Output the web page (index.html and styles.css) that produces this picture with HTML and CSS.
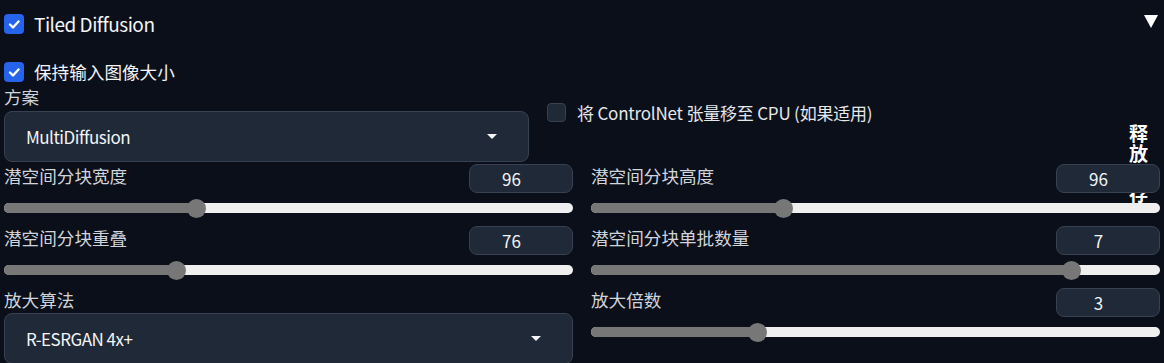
FILE: index.html
```html
<!DOCTYPE html>
<html lang="zh">
<head>
<meta charset="utf-8">
<title>Tiled Diffusion</title>
<link rel="stylesheet" href="styles.css">
</head>
<body>
<div class="panel">
  <div class="accordion-head">
    <label class="check-row title">
      <span class="cb on"><svg viewBox="0 0 20 20" width="20" height="20"><path d="M6 10.5l3 3 5.5-6" fill="none" stroke="#fff" stroke-width="2.4" stroke-linecap="round" stroke-linejoin="round"/></svg></span>
      <span class="latin">Tiled Diffusion</span>
    </label>
    <svg class="caret" viewBox="0 0 14 13" width="14" height="13"><polygon points="0,0 14,0 7,13" fill="#fff"/></svg>
  </div>

  <label class="check-row keep">
    <span class="cb on"><svg viewBox="0 0 20 20" width="20" height="20"><path d="M6 10.5l3 3 5.5-6" fill="none" stroke="#fff" stroke-width="2.4" stroke-linecap="round" stroke-linejoin="round"/></svg></span>
    <span>保持输入图像大小</span>
  </label>

  <div class="row1">
    <div class="field method">
      <div class="label">方案</div>
      <div class="select"><span class="latin">MultiDiffusion</span><span class="arrow"></span></div>
    </div>
    <label class="check-row cn">
      <span class="cb off"></span>
      <span>将 ControlNet 张量移至 CPU (如果适用)</span>
    </label>
    <div class="free-btn">释放显存</div>
  </div>

  <div class="grid">
    <div class="slider">
      <div class="slider-head"><span class="label">潜空间分块宽度</span><span class="num">96</span></div>
      <div class="range"><div class="track"><div class="fill" style="width:33.9%"></div></div><span class="thumb" style="left:33.9%"></span></div>
    </div>
    <div class="slider">
      <div class="slider-head"><span class="label">潜空间分块高度</span><span class="num">96</span></div>
      <div class="range"><div class="track"><div class="fill" style="width:33.9%"></div></div><span class="thumb" style="left:33.9%"></span></div>
    </div>
    <div class="slider">
      <div class="slider-head"><span class="label">潜空间分块重叠</span><span class="num">76</span></div>
      <div class="range"><div class="track"><div class="fill" style="width:30.4%"></div></div><span class="thumb" style="left:30.4%"></span></div>
    </div>
    <div class="slider">
      <div class="slider-head"><span class="label">潜空间分块单批数量</span><span class="num">7</span></div>
      <div class="range"><div class="track"><div class="fill" style="width:84.5%"></div></div><span class="thumb" style="left:84.5%"></span></div>
    </div>
    <div class="field upscaler">
      <div class="label">放大算法</div>
      <div class="select"><span class="latin">R-ESRGAN 4x+</span><span class="arrow"></span></div>
    </div>
    <div class="slider">
      <div class="slider-head"><span class="label">放大倍数</span><span class="num">3</span></div>
      <div class="range"><div class="track"><div class="fill" style="width:29.2%"></div></div><span class="thumb" style="left:29.2%"></span></div>
    </div>
  </div>
</div>
</body>
</html>
```

FILE: styles.css
```css
* {
  box-sizing: border-box;
}

html,
body {
  margin: 0;
  padding: 0;
  background: #0b0f19;
}

body {
  width: 1164px;
  height: 363px;
  overflow: hidden;
  font-family: "Noto Sans CJK SC", "Noto Sans", sans-serif;
  color: #e5e7eb;
}

.panel {
  padding: 0 4px;
}

/* accordion header */
.accordion-head {
  display: flex;
  justify-content: space-between;
  align-items: flex-start;
  margin-top: 14px;
  height: 20px;
}

.check-row {
  display: flex;
  align-items: center;
  gap: 10px;
}

.cb {
  flex: none;
  width: 20px;
  height: 20px;
  border-radius: 4px;
  display: flex;
  align-items: center;
  justify-content: center;
}

.cb.on {
  background: #2563eb;
}

.cb.off {
  width: 19px;
  height: 19px;
  background: #1f2937;
  border: 1px solid #374151;
}

.title {
  font-size: 19px;
  line-height: 18px;
  color: #f3f4f6;
}

.title .latin {
  letter-spacing: -0.5px;
}

.caret {
  display: block;
  margin: 1px 2px 0 0;
}

.keep {
  margin-top: 28px;
  height: 20px;
  font-size: 17.6px;
  line-height: 20px;
  color: #f3f4f6;
}

/* first row */
.row1 {
  display: flex;
  margin-top: 4px;
  height: 76px;
}

.field {
  display: flex;
  flex-direction: column;
}

.method {
  width: 525px;
}

.label {
  font-size: 17.6px;
  line-height: 22px;
  color: #d1d5db;
  white-space: nowrap;
}

.method .label {
  margin-bottom: 3px;
}

.select {
  height: 51px;
  flex: none;
  display: flex;
  align-items: center;
  justify-content: space-between;
  padding: 0 31px 0 21px;
  background: #1f2937;
  border: 1px solid #374151;
  border-radius: 8px;
  font-size: 17px;
  color: #f3f4f6;
}

.select .latin {
  letter-spacing: -0.5px;
}

.arrow {
  width: 0;
  height: 0;
  border-left: 5px solid transparent;
  border-right: 5px solid transparent;
  border-top: 5px solid #f3f4f6;
}

.cn {
  align-self: flex-start;
  margin-left: 18px;
  margin-top: 17px;
  gap: 11px;
  font-size: 17px;
  line-height: 19px;
  letter-spacing: -0.2px;
  color: #e5e7eb;
  white-space: nowrap;
}

.free-btn {
  align-self: flex-start;
  margin-left: auto;
  margin-right: 12px;
  margin-top: 37px;
  width: 19px;
  height: 20px;
  font-size: 19px;
  font-weight: 700;
  line-height: 20px;
  color: #ffffff;
}

/* slider grid */
.grid {
  display: grid;
  grid-template-columns: 569px 569px;
  grid-template-rows: 62px 62px auto;
  column-gap: 18px;
  margin-top: 2px;
}

.slider {
  display: flex;
  flex-direction: column;
}

.slider-head {
  display: flex;
  justify-content: space-between;
  align-items: flex-start;
  height: 29px;
}

.slider-head .label {
  margin-top: 1px;
}

.num {
  width: 104px;
  height: 29px;
  display: flex;
  align-items: center;
  justify-content: center;
  padding-right: 19px;
  background: #1f2937;
  border: 1px solid #374151;
  border-radius: 8px;
  font-size: 17px;
  color: #f3f4f6;
}

.range {
  position: relative;
  height: 18px;
  margin-top: 6px;
  padding-top: 4px;
}

.track {
  height: 10px;
  border-radius: 5px;
  background: #efefef;
  overflow: hidden;
}

.fill {
  height: 100%;
  background: #777777;
}

.thumb {
  position: absolute;
  top: -0.5px;
  width: 19px;
  height: 19px;
  margin-left: -9.5px;
  border-radius: 50%;
  background: #777777;
}

.upscaler .label {
  margin-top: 1px;
  margin-bottom: 2px;
}
```
